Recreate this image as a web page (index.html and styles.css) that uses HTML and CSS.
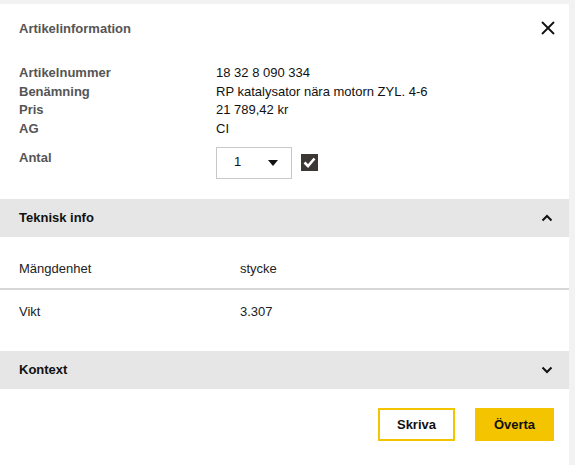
FILE: index.html
```html
<!DOCTYPE html>
<html lang="sv">
<head>
    <meta charset="UTF-8">
    <title>Artikelinformation</title>
    <link rel="stylesheet" href="styles.css">
</head>
<body>
    <div class="dialog">
        <!-- Header -->
        <div class="dialog-head">
            <h2>Artikelinformation</h2>
            <button class="close" aria-label="Stäng">
                <svg width="14" height="14" viewBox="0 0 14 14"><path d="M1 1 L13 13 M13 1 L1 13" stroke="#111" stroke-width="1.8" fill="none"/></svg>
            </button>
        </div>

        <!-- Article data -->
        <div class="info">
            <div class="label">Artikelnummer</div><div class="value">18 32 8 090 334</div>
            <div class="label">Benämning</div><div class="value">RP katalysator nära motorn ZYL. 4-6</div>
            <div class="label">Pris</div><div class="value">21 789,42 kr</div>
            <div class="label">AG</div><div class="value">CI</div>
            <div class="label qty-label">Antal</div>
            <div class="value qty">
                <div class="select">
                    <span>1</span>
                    <svg width="10" height="6" viewBox="0 0 10 6"><path d="M0 0 H10 L5 6 Z" fill="#111"/></svg>
                </div>
                <span class="check">
                    <svg width="13" height="11" viewBox="0 0 13 11"><path d="M1.5 5.5 L5 9 L11.5 1.5" stroke="#fff" stroke-width="2.6" fill="none"/></svg>
                </span>
            </div>
        </div>

        <!-- Teknisk info -->
        <div class="section-bar">
            <span>Teknisk info</span>
            <svg width="12" height="8" viewBox="0 0 12 8"><path d="M1.5 6.5 L6 2 L10.5 6.5" stroke="#111" stroke-width="2" fill="none"/></svg>
        </div>
        <div class="tech">
            <div class="tech-row first"><span>Mängdenhet</span><span>stycke</span></div>
            <div class="tech-row"><span>Vikt</span><span>3.307</span></div>
        </div>

        <!-- Kontext -->
        <div class="section-bar">
            <span>Kontext</span>
            <svg width="12" height="8" viewBox="0 0 12 8"><path d="M1.5 1.5 L6 6 L10.5 1.5" stroke="#111" stroke-width="2" fill="none"/></svg>
        </div>

        <div class="actions">
            <button class="btn btn-outline">Skriva</button>
            <button class="btn btn-primary">Överta</button>
        </div>
    </div>
</body>
</html>
```

FILE: styles.css
```css
* {
    margin: 0;
    padding: 0;
    box-sizing: border-box;
}

body {
    font-family: "Liberation Sans", Arial, sans-serif;
    font-size: 13px;
    color: #111;
    background: #f2f2f2;
    padding: 4px 6px 0 0;
    height: 465px;
    overflow: hidden;
}

.dialog {
    background: #fff;
    height: 100%;
}

.dialog-head {
    display: flex;
    justify-content: space-between;
    align-items: center;
    height: 48px;
    padding: 0 19px;
}

.dialog-head h2 {
    font-size: 13px;
    font-weight: bold;
    color: #555;
}

.close {
    border: none;
    background: none;
    display: flex;
    margin-right: -5px;
}

.info {
    display: grid;
    grid-template-columns: 197px 1fr;
    line-height: 18.7px;
    padding: 12px 19px 20px;
}

.label {
    font-weight: bold;
    color: #555;
}

.qty {
    margin-top: 8px;
}

.qty-label {
    margin-top: 10px;
}

.qty {
    display: flex;
    align-items: center;
    gap: 9px;
}

.select {
    width: 76px;
    height: 32px;
    border: 1px solid #c8c8c8;
    display: flex;
    align-items: center;
    justify-content: space-between;
    padding: 0 13px 0 17px;
}

.check {
    width: 17px;
    height: 17px;
    background: #3b3733;
    display: flex;
    align-items: center;
    justify-content: center;
    margin-top: -1px;
}

.section-bar {
    display: flex;
    justify-content: space-between;
    align-items: center;
    height: 38px;
    padding: 0 16px 0 19px;
    background: #e6e6e6;
    font-weight: bold;
}

.tech {
    margin-bottom: 30px;
}

.tech-row {
    display: grid;
    grid-template-columns: 221px 1fr;
    line-height: 18px;
    padding: 13px 19px 0;
    color: #222;
}

.tech-row.first {
    padding: 23px 19px 10px;
    border-bottom: 2px solid #d6d6d6;
}

.actions {
    display: flex;
    justify-content: flex-end;
    gap: 20px;
    padding: 19px 15px 0;
}

.btn {
    font-family: inherit;
    font-size: 13px;
    font-weight: bold;
    color: #111;
    height: 33px;
    cursor: pointer;
}

.btn-outline {
    width: 77px;
    background: #fff;
    border: 2px solid #f5c400;
}

.btn-primary {
    width: 79px;
    background: #f5c400;
    border: none;
}
```
